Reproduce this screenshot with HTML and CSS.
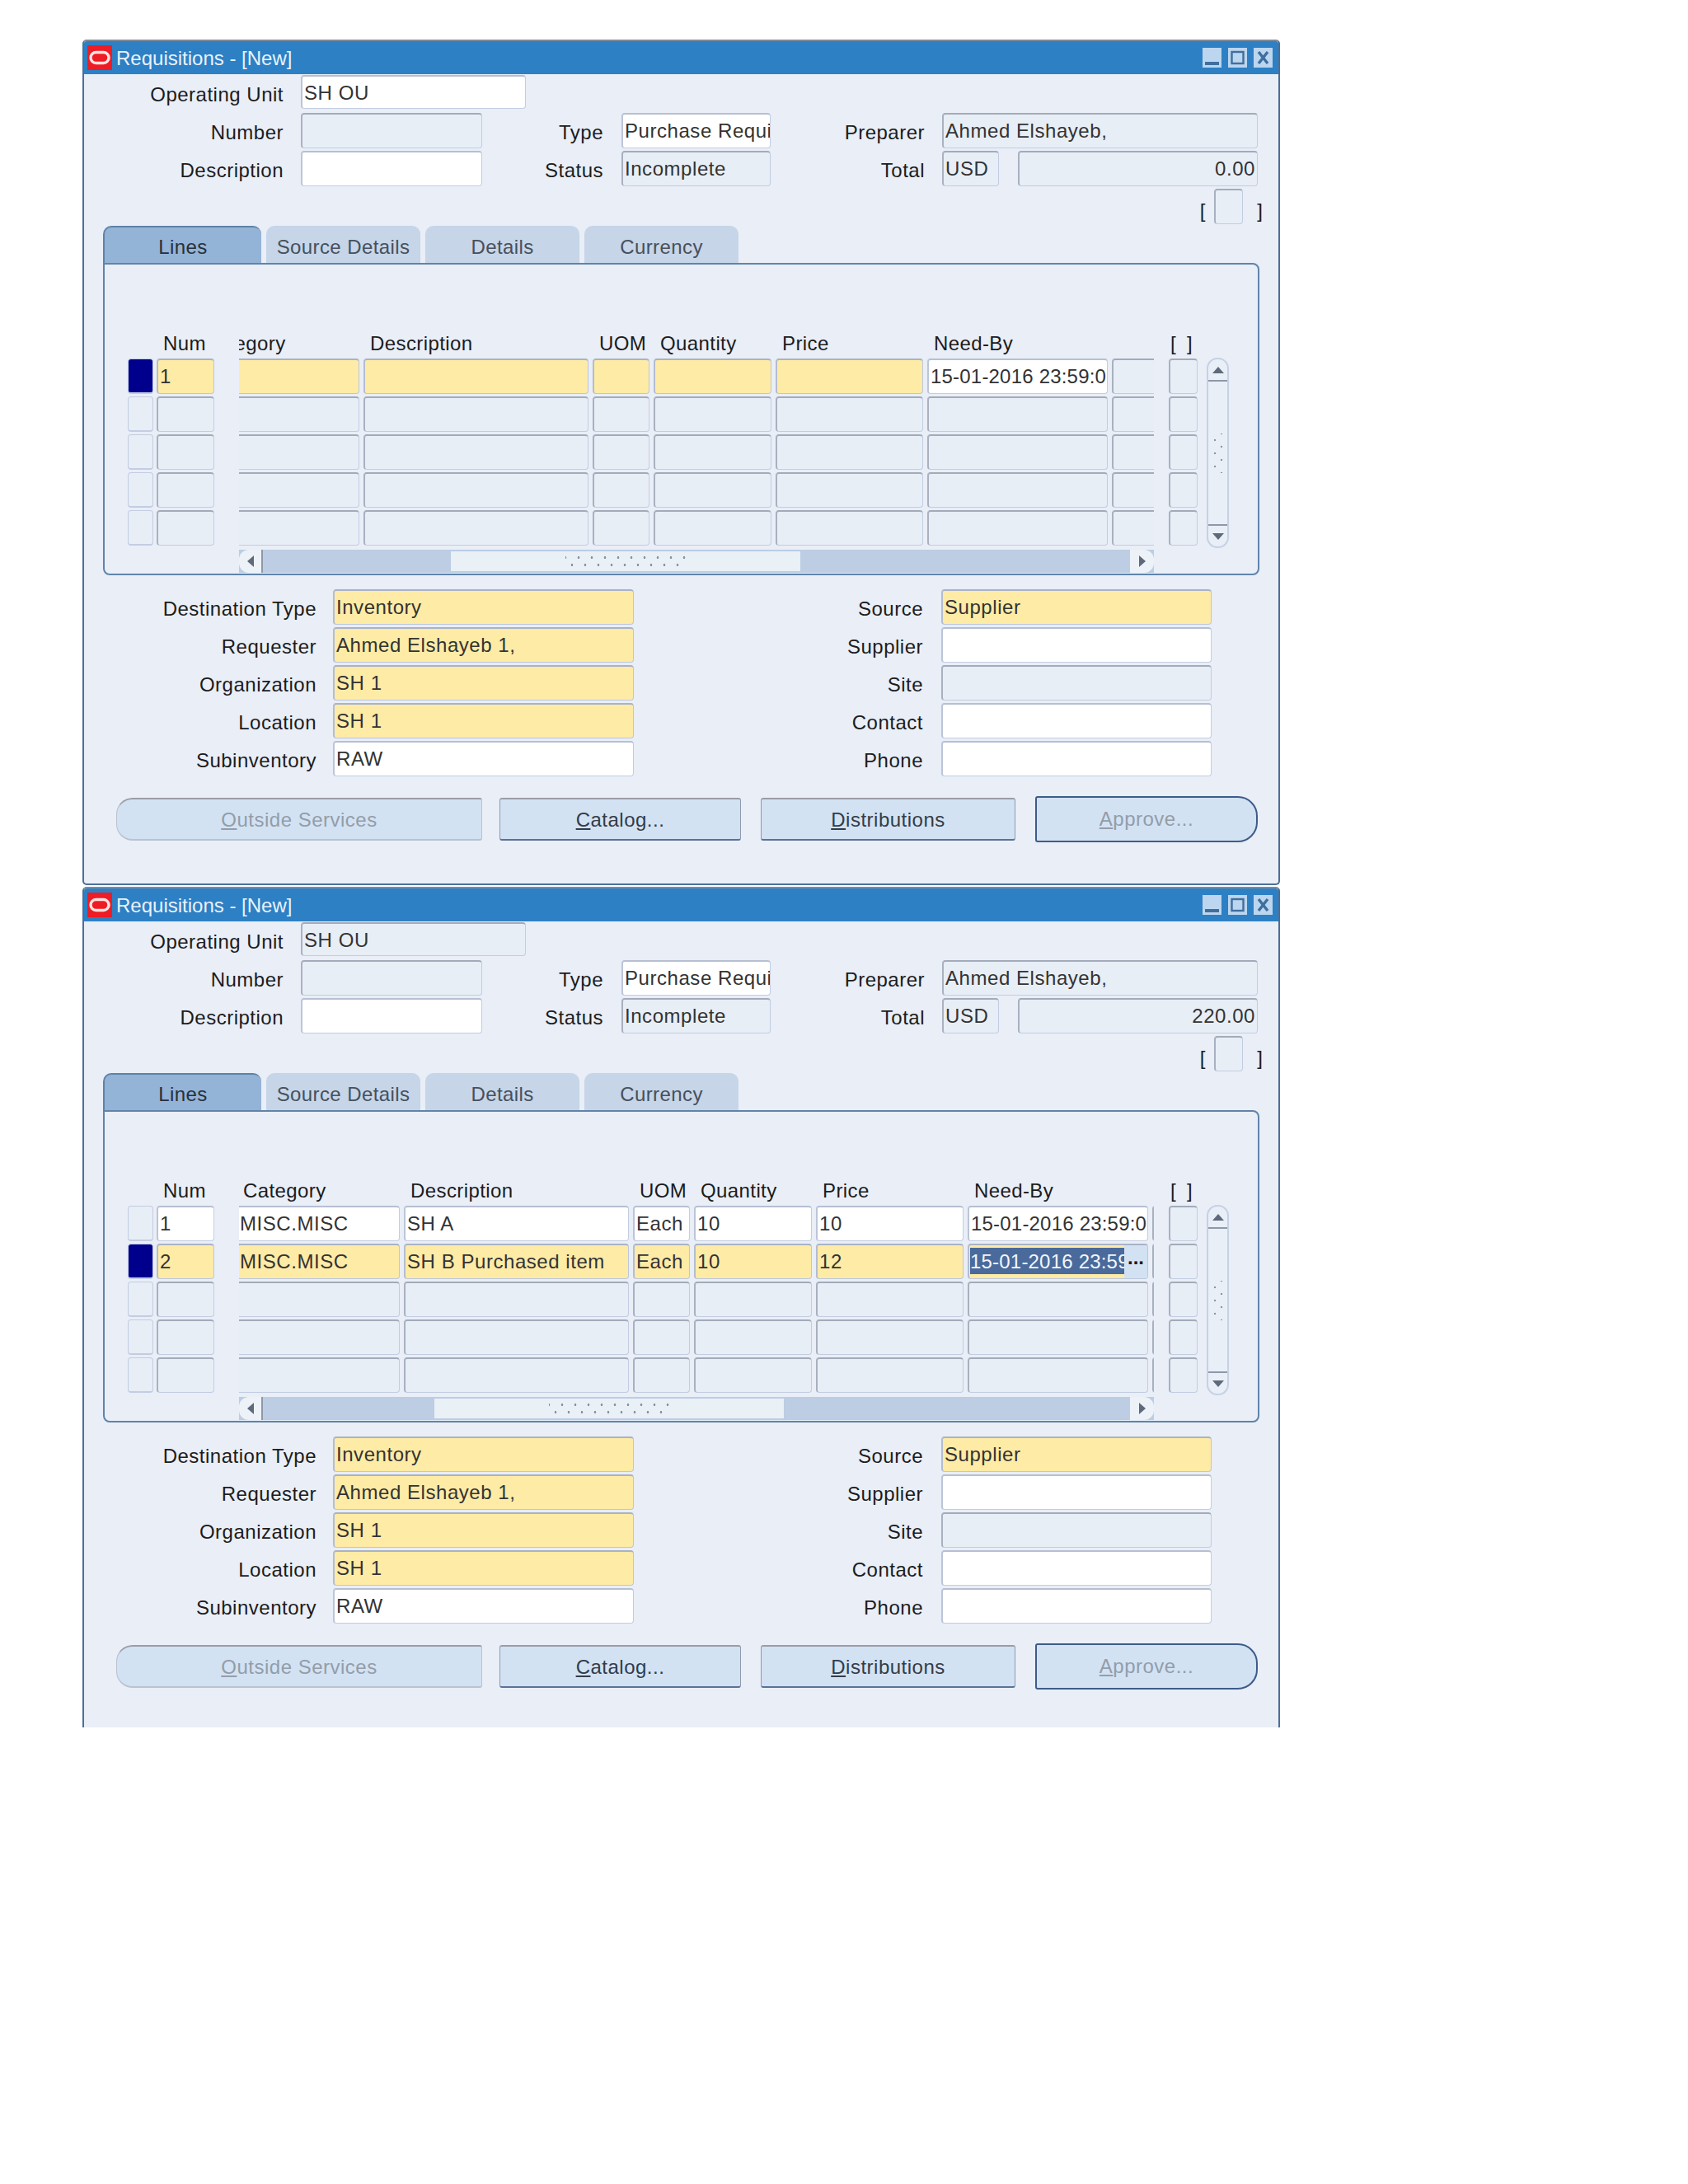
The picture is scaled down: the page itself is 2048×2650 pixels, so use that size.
FILE: index.html
```html
<!DOCTYPE html>
<html lang="en">

<head>
    <meta charset="UTF-8">
    <title>Requisitions</title>
    <link rel="stylesheet" href="styles.css">
</head>

<body>
    <!-- first window: empty requisition -->
    <div class="window">
        <div class="titlebar">
            <svg class="logo" viewBox="0 0 30 30"><rect width="30" height="30" fill="#ee1c25"/><rect x="4" y="8.5" width="22" height="13" rx="6.5" fill="none" stroke="#ffe3e0" stroke-width="3.4"/></svg>
            <span class="title">Requisitions - [New]</span>
            <span class="winbtns">
                <svg viewBox="0 0 23 24"><rect width="23" height="24" fill="#bcd6ef"/><rect x="3" y="17" width="17" height="4" fill="#3f6f9f"/></svg>
                <svg viewBox="0 0 23 24"><rect width="23" height="24" fill="#bcd6ef"/><rect x="4.5" y="5" width="14" height="14" fill="none" stroke="#3f6f9f" stroke-width="2.4"/></svg>
                <svg viewBox="0 0 23 24"><rect width="23" height="24" fill="#bcd6ef"/><path d="M6 5l11 14M17 5L6 19" stroke="#3f6f9f" stroke-width="3.4"/></svg>
            </span>
        </div>

        <div class="head">
            <label class="l1">Operating Unit</label>
            <div class="f w ou">SH OU</div>
            <label class="l1">Number</label>
            <div class="f"></div>
            <label class="l3">Type</label>
            <div class="f w">Purchase Requi</div>
            <label class="l5">Preparer</label>
            <div class="f span3">Ahmed Elshayeb,</div>
            <label class="l1">Description</label>
            <div class="f w"></div>
            <label class="l3">Status</label>
            <div class="f">Incomplete</div>
            <label class="l5">Total</label>
            <div class="f">USD</div>
            <div class="f num amount">0.00</div>
            <div class="flexfield"><span>[</span><div class="f box"></div><span>]</span></div>
        </div>

        <div class="tabs">
            <div class="tab active">Lines</div>
            <div class="tab">Source Details</div>
            <div class="tab">Details</div>
            <div class="tab">Currency</div>
        </div>

        <div class="panel">
            <div class="lines">
                <div class="col marks">
                    <div class="hd"></div>
                    <div class="m on"></div>
                    <div class="m"></div>
                    <div class="m"></div>
                    <div class="m"></div>
                    <div class="m"></div>
                </div>
                <div class="col nums">
                    <div class="hd">Num</div>
                    <div class="f y">1</div>
                    <div class="f"></div>
                    <div class="f"></div>
                    <div class="f"></div>
                    <div class="f"></div>
                </div>
                <div class="scroller">
                    <div class="clip">
                        <div class="grid shifted">
                            <div class="hd">Category</div><div class="hd">Description</div><div class="hd">UOM</div><div class="hd">Quantity</div><div class="hd">Price</div><div class="hd">Need-By</div><div class="hd"></div>
                            <div class="f y"></div><div class="f y"></div><div class="f y"></div><div class="f y"></div><div class="f y"></div><div class="f w date">15-01-2016 23:59:0</div><div class="f"></div>
                            <div class="f"></div><div class="f"></div><div class="f"></div><div class="f"></div><div class="f"></div><div class="f"></div><div class="f"></div>
                            <div class="f"></div><div class="f"></div><div class="f"></div><div class="f"></div><div class="f"></div><div class="f"></div><div class="f"></div>
                            <div class="f"></div><div class="f"></div><div class="f"></div><div class="f"></div><div class="f"></div><div class="f"></div><div class="f"></div>
                            <div class="f"></div><div class="f"></div><div class="f"></div><div class="f"></div><div class="f"></div><div class="f"></div><div class="f"></div>
                        </div>
                    </div>
                    <div class="hbar">
                        <div class="sbtn left"><i></i></div>
                        <div class="track"><div class="thumb t1"><div class="grip"></div></div></div>
                        <div class="sbtn right"><i></i></div>
                    </div>
                </div>
                <div class="col checks">
                    <div class="hd brk"><span>[</span><span>]</span></div>
                    <div class="f"></div>
                    <div class="f"></div>
                    <div class="f"></div>
                    <div class="f"></div>
                    <div class="f"></div>
                </div>
                <div class="vbar">
                    <div class="vbtn up"><i></i></div>
                    <div class="vmid"><div class="vgrip"></div></div>
                    <div class="vbtn down"><i></i></div>
                </div>
            </div>
        </div>

        <div class="lower">
            <label class="l1">Destination Type</label>
            <div class="f y">Inventory</div>
            <label class="l3">Source</label>
            <div class="f y">Supplier</div>
            <label class="l1">Requester</label>
            <div class="f y">Ahmed Elshayeb 1,</div>
            <label class="l3">Supplier</label>
            <div class="f w"></div>
            <label class="l1">Organization</label>
            <div class="f y">SH 1</div>
            <label class="l3">Site</label>
            <div class="f"></div>
            <label class="l1">Location</label>
            <div class="f y">SH 1</div>
            <label class="l3">Contact</label>
            <div class="f w"></div>
            <label class="l1">Subinventory</label>
            <div class="f w">RAW</div>
            <label class="l3">Phone</label>
            <div class="f w"></div>
        </div>

        <div class="buttons">
            <div class="btn outside off"><u>O</u>utside Services</div>
            <div class="btn catalog"><u>C</u>atalog...</div>
            <div class="btn distrib"><u>D</u>istributions</div>
            <div class="btn approve off"><u>A</u>pprove...</div>
        </div>
    </div>

    <!-- second window: two lines entered, cut at the bottom -->
    <div class="window cut">
        <div class="titlebar">
            <svg class="logo" viewBox="0 0 30 30"><rect width="30" height="30" fill="#ee1c25"/><rect x="4" y="8.5" width="22" height="13" rx="6.5" fill="none" stroke="#ffe3e0" stroke-width="3.4"/></svg>
            <span class="title">Requisitions - [New]</span>
            <span class="winbtns">
                <svg viewBox="0 0 23 24"><rect width="23" height="24" fill="#bcd6ef"/><rect x="3" y="17" width="17" height="4" fill="#3f6f9f"/></svg>
                <svg viewBox="0 0 23 24"><rect width="23" height="24" fill="#bcd6ef"/><rect x="4.5" y="5" width="14" height="14" fill="none" stroke="#3f6f9f" stroke-width="2.4"/></svg>
                <svg viewBox="0 0 23 24"><rect width="23" height="24" fill="#bcd6ef"/><path d="M6 5l11 14M17 5L6 19" stroke="#3f6f9f" stroke-width="3.4"/></svg>
            </span>
        </div>

        <div class="head">
            <label class="l1">Operating Unit</label>
            <div class="f ou">SH OU</div>
            <label class="l1">Number</label>
            <div class="f"></div>
            <label class="l3">Type</label>
            <div class="f w">Purchase Requi</div>
            <label class="l5">Preparer</label>
            <div class="f span3">Ahmed Elshayeb,</div>
            <label class="l1">Description</label>
            <div class="f w"></div>
            <label class="l3">Status</label>
            <div class="f">Incomplete</div>
            <label class="l5">Total</label>
            <div class="f">USD</div>
            <div class="f num amount">220.00</div>
            <div class="flexfield"><span>[</span><div class="f box"></div><span>]</span></div>
        </div>

        <div class="tabs">
            <div class="tab active">Lines</div>
            <div class="tab">Source Details</div>
            <div class="tab">Details</div>
            <div class="tab">Currency</div>
        </div>

        <div class="panel">
            <div class="lines">
                <div class="col marks">
                    <div class="hd"></div>
                    <div class="m"></div>
                    <div class="m on"></div>
                    <div class="m"></div>
                    <div class="m"></div>
                    <div class="m"></div>
                </div>
                <div class="col nums">
                    <div class="hd">Num</div>
                    <div class="f w">1</div>
                    <div class="f y">2</div>
                    <div class="f"></div>
                    <div class="f"></div>
                    <div class="f"></div>
                </div>
                <div class="scroller">
                    <div class="clip">
                        <div class="grid">
                            <div class="hd">Category</div><div class="hd">Description</div><div class="hd">UOM</div><div class="hd">Quantity</div><div class="hd">Price</div><div class="hd">Need-By</div><div class="hd"></div>
                            <div class="f w">MISC.MISC</div><div class="f w">SH A</div><div class="f w">Each</div><div class="f w">10</div><div class="f w">10</div><div class="f w date">15-01-2016 23:59:0</div><div class="f"></div>
                            <div class="f y">MISC.MISC</div><div class="f y">SH B Purchased item</div><div class="f y">Each</div><div class="f y">10</div><div class="f y">12</div><div class="f y cur"><span class="sel date">15-01-2016 23:59:0</span><span class="lov">...</span></div><div class="f"></div>
                            <div class="f"></div><div class="f"></div><div class="f"></div><div class="f"></div><div class="f"></div><div class="f"></div><div class="f"></div>
                            <div class="f"></div><div class="f"></div><div class="f"></div><div class="f"></div><div class="f"></div><div class="f"></div><div class="f"></div>
                            <div class="f"></div><div class="f"></div><div class="f"></div><div class="f"></div><div class="f"></div><div class="f"></div><div class="f"></div>
                        </div>
                    </div>
                    <div class="hbar">
                        <div class="sbtn left"><i></i></div>
                        <div class="track"><div class="thumb"><div class="grip"></div></div></div>
                        <div class="sbtn right"><i></i></div>
                    </div>
                </div>
                <div class="col checks">
                    <div class="hd brk"><span>[</span><span>]</span></div>
                    <div class="f"></div>
                    <div class="f"></div>
                    <div class="f"></div>
                    <div class="f"></div>
                    <div class="f"></div>
                </div>
                <div class="vbar">
                    <div class="vbtn up"><i></i></div>
                    <div class="vmid"><div class="vgrip"></div></div>
                    <div class="vbtn down"><i></i></div>
                </div>
            </div>
        </div>

        <div class="lower">
            <label class="l1">Destination Type</label>
            <div class="f y">Inventory</div>
            <label class="l3">Source</label>
            <div class="f y">Supplier</div>
            <label class="l1">Requester</label>
            <div class="f y">Ahmed Elshayeb 1,</div>
            <label class="l3">Supplier</label>
            <div class="f w"></div>
            <label class="l1">Organization</label>
            <div class="f y">SH 1</div>
            <label class="l3">Site</label>
            <div class="f"></div>
            <label class="l1">Location</label>
            <div class="f y">SH 1</div>
            <label class="l3">Contact</label>
            <div class="f w"></div>
            <label class="l1">Subinventory</label>
            <div class="f w">RAW</div>
            <label class="l3">Phone</label>
            <div class="f w"></div>
        </div>

        <div class="buttons">
            <div class="btn outside off"><u>O</u>utside Services</div>
            <div class="btn catalog"><u>C</u>atalog...</div>
            <div class="btn distrib"><u>D</u>istributions</div>
            <div class="btn approve off"><u>A</u>pprove...</div>
        </div>
    </div>
</body>

</html>
```

FILE: styles.css
```css
* {
    margin: 0;
    padding: 0;
    box-sizing: border-box;
}

body {
    background: #fff;
    padding: 48px 0 0 100px;
    font: 24px/1 "Liberation Sans", Arial, sans-serif;
    color: #1c1c1c;
}

/* window frame */
.window {
    width: 1453px;
    height: 1026px;
    background: #e9eef7;
    border: 2px solid #4d6f96;
    border-top: 2px solid #7d8a9b;
    border-radius: 5px;
    overflow: hidden;
}

.window.cut {
    height: 1020px;
    margin-top: 2px;
    border-bottom: none;
    border-radius: 5px 5px 0 0;
}

.titlebar {
    display: flex;
    align-items: center;
    height: 40px;
    background: #2d80c4;
    padding: 0 7px 0 4px;
    color: #e8f2fb;
}

.logo {
    width: 30px;
    height: 30px;
}

.title {
    margin-left: 5px;
    padding-top: 2px;
}

.winbtns {
    display: flex;
    gap: 8px;
    margin-left: auto;
}

.winbtns svg {
    width: 23px;
    height: 24px;
}

/* fields */
.f {
    height: 43px;
    min-width: 0;
    padding-left: 2px;
    line-height: 40px;
    letter-spacing: 0.55px;
    white-space: nowrap;
    overflow: hidden;
    color: #333;
    background: #e8eef6;
    border: 1px solid #c3cde2;
    border-top: 2px solid #a3abba;
    border-left: 2px solid #a9b1c0;
    border-radius: 4px;
}

.f.w {
    background: #fff;
    border-top-color: #b6bfd3;
    border-left-color: #bcc5d8;
}

.f.y {
    background: #feeba6;
    border-color: #bcc7dc;
    border-top-color: #a9b2c6;
    border-left-color: #b4bdd0;
}

.num {
    text-align: right;
    padding-right: 2px;
}

.date {
    letter-spacing: 0.2px;
}

/* header block */
.head {
    display: grid;
    grid-template-columns: 263px 220px 169px 181px 208px 69px 23px 291px;
    grid-auto-rows: 43px;
    row-gap: 3px;
    padding-top: 1px;
}

label {
    display: block;
    text-align: right;
    padding-top: 12px;
    letter-spacing: 0.5px;
    color: #1c1c1c;
    white-space: nowrap;
}

.head .l1 {
    grid-column: 1;
    padding-right: 21px;
}

.head .l3 {
    grid-column: 3;
    padding-right: 22px;
}

.head .l5 {
    grid-column: 5;
    padding-right: 21px;
}

.ou {
    grid-column: 2 / 4;
    width: 273px;
    height: 41px;
}

.head .l1 + .f:not(.ou) {
    grid-column: 2;
}

.span3 {
    grid-column: 6 / 9;
}

.amount {
    grid-column: 8;
}

.flexfield {
    grid-column: 6 / 9;
    display: flex;
    justify-content: flex-end;
    align-items: flex-end;
    gap: 10px;
    margin-right: -6px;
}

.flexfield span {
    padding-bottom: 4px;
}

.flexfield span:first-child {
    margin-right: 1px;
}

.flexfield span:last-child {
    margin-left: 7px;
}

.box {
    width: 35px;
}

/* tabs */
.tabs {
    display: flex;
    gap: 6px;
    margin: 2px 0 0 23px;
    height: 45px;
}

.tab {
    width: 187px;
    text-align: center;
    padding-top: 14px;
    letter-spacing: 0.4px;
    color: #47505c;
    background: #c6d5e8;
    border-radius: 10px 10px 0 0;
}

.tab.active {
    width: 192px;
    color: #26303c;
    background: #93b3d7;
    border-top: 2px solid #5f82a8;
    border-left: 2px solid #5f82a8;
    padding-top: 12px;
}

/* lines panel */
.panel {
    width: 1403px;
    height: 379px;
    margin-left: 23px;
    padding: 84px 0 0 28px;
    border: 2px solid #5f84aa;
    border-radius: 0 8px 8px 8px;
}

.lines {
    display: flex;
}

.col {
    display: flex;
    flex-direction: column;
    gap: 3px;
}

.hd {
    height: 27px;
    padding: 0 0 0 8px;
    letter-spacing: 0.4px;
    white-space: nowrap;
    overflow: visible;
}

.marks {
    width: 31px;
}

.m {
    height: 43px;
    background: #e8eef6;
    border: 1px solid #c3cde2;
    border-bottom-width: 2px;
    border-radius: 4px;
}

.m.on {
    background: #00008c;
}

.nums {
    width: 70px;
    margin-left: 4px;
}

.nums .hd {
    padding-left: 8px;
}

.scroller {
    width: 1110px;
    margin-left: 30px;
}

.clip {
    overflow: hidden;
}

.grid {
    display: grid;
    width: 1200px;
    margin-left: -3px;
    grid-template-columns: 198px 273px 69px 143px 179px 219px 60px;
    column-gap: 5px;
    row-gap: 3px;
}

.grid.shifted {
    margin-left: -52px;
}

.cur {
    display: flex;
    align-items: stretch;
    padding: 3px 0 5px 1px;
}

.sel {
    flex: 1;
    min-width: 0;
    overflow: hidden;
    line-height: 33px;
    color: #f2f5fb;
    background: #4a6a9c;
}

.lov {
    width: 28px;
    margin: -3px 0 -5px;
    text-align: center;
    line-height: 30px;
    font-weight: bold;
    letter-spacing: 0;
    color: #2a1414;
    background: #d2e2f3;
}

/* scrollbars */
.hbar {
    display: flex;
    height: 28px;
    margin-top: 5px;
    background: #bccde4;
}

.sbtn {
    width: 29px;
    display: flex;
    align-items: center;
    justify-content: center;
    background: #edf2f8;
}

.sbtn.left {
    border-radius: 12px 0 0 12px;
    border-right: 2px solid #8d99aa;
}

.sbtn.right {
    border-radius: 0 12px 12px 0;
}

.sbtn i {
    width: 0;
    height: 0;
    border-top: 7px solid transparent;
    border-bottom: 7px solid transparent;
}

.sbtn.left i {
    border-right: 8px solid #5e6a7c;
}

.sbtn.right i {
    border-left: 8px solid #5e6a7c;
}

.track {
    flex: 1;
    display: flex;
}

.thumb {
    width: 424px;
    margin: 2px 0 2px 208px;
    display: flex;
    align-items: center;
    justify-content: center;
    background: #e9f0f6;
}

.thumb.t1 {
    margin-left: 228px;
}

.grip {
    width: 146px;
    height: 18px;
    background-image:
        radial-gradient(circle, #8a94a3 1.2px, transparent 1.6px),
        radial-gradient(circle, #8a94a3 1.2px, transparent 1.6px);
    background-size: 16px 9px;
    background-position: 8px 0, 0 9px;
    background-repeat: repeat-x;
}

.checks {
    width: 35px;
    margin-left: 18px;
}

.brk {
    display: flex;
    gap: 13px;
    padding-left: 2px;
}

.vbar {
    width: 27px;
    height: 231px;
    margin: 29px 0 0 11px;
    display: flex;
    flex-direction: column;
    border: 2px solid #c6d1e4;
    border-radius: 13px;
    background: #e9eff7;
}

.vbtn {
    height: 27px;
    display: flex;
    align-items: center;
    justify-content: center;
}

.vbtn.up {
    border-bottom: 2px solid #8d99aa;
}

.vbtn.down {
    border-top: 2px solid #8d99aa;
}

.vbtn i {
    width: 0;
    height: 0;
    border-left: 7px solid transparent;
    border-right: 7px solid transparent;
}

.vbtn.up i {
    border-bottom: 8px solid #5e6a7c;
}

.vbtn.down i {
    border-top: 8px solid #5e6a7c;
}

.vmid {
    flex: 1;
    display: flex;
    align-items: center;
    justify-content: center;
}

.vgrip {
    width: 16px;
    height: 48px;
    background-image:
        radial-gradient(circle, #8a94a3 1.2px, transparent 1.6px),
        radial-gradient(circle, #8a94a3 1.2px, transparent 1.6px);
    background-size: 8px 16px;
    background-position: 0 0, 8px 8px;
    background-repeat: repeat-y;
}

/* lower form */
.lower {
    display: grid;
    grid-template-columns: 302px 365px 373px 328px;
    grid-auto-rows: 43px;
    row-gap: 3px;
    margin-top: 17px;
}

.lower .l1,
.lower .l3 {
    padding-right: 20px;
}

.lower .l3 {
    padding-right: 22px;
}

/* buttons */
.buttons {
    display: flex;
    align-items: center;
    height: 56px;
    margin: 24px 0 0 39px;
}

.btn {
    height: 52px;
    line-height: 50px;
    text-align: center;
    letter-spacing: 0.5px;
    color: #333c48;
    background: #d2e2f3;
    border: 1px solid #8d9bb0;
    border-top: 2px solid #9a9ca6;
    border-bottom: 2px solid #5a7296;
    border-radius: 3px;
}

.btn.off {
    color: #939da9;
}

.outside {
    width: 444px;
    margin-right: 21px;
    border-color: #b9c2d0;
    border-top-color: #9a9ca6;
    border-radius: 20px 3px 3px 20px;
}

.catalog {
    width: 293px;
    margin-right: 24px;
}

.distrib {
    width: 309px;
    margin-right: 24px;
}

.approve {
    width: 270px;
    height: 56px;
    line-height: 52px;
    border: 2px solid #3d5c8a;
    border-radius: 3px 24px 24px 3px;
}
```
